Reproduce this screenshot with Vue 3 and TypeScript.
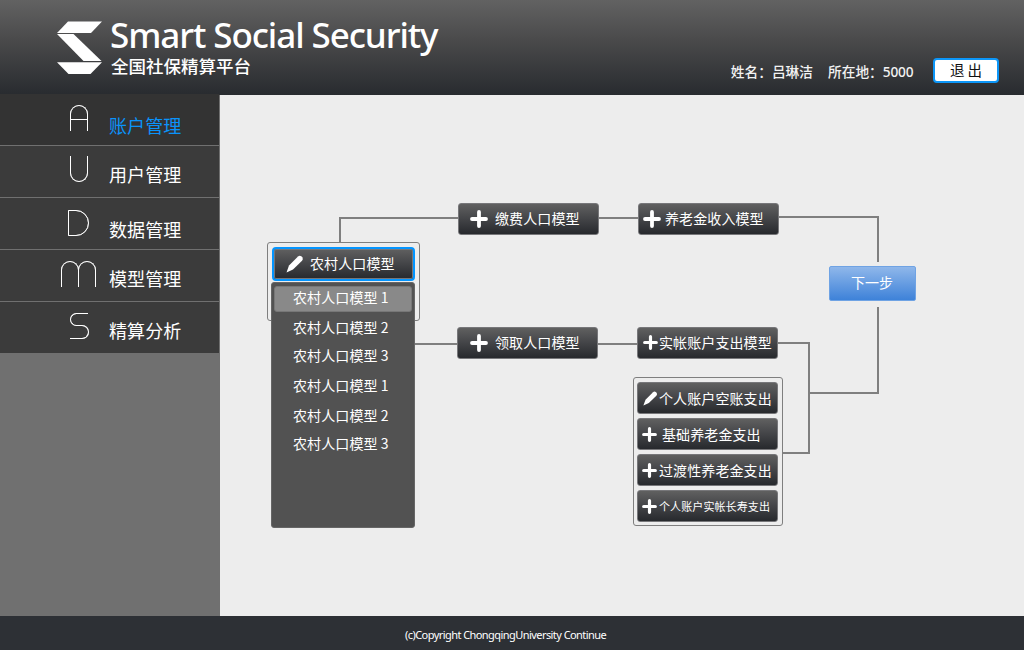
<script setup lang="ts">
type IconKind = 'plus' | 'pen'

interface MenuEntry {
  letter: string
  label: string
  active?: boolean
  // which vertical offset the label uses inside its row
  labelTop: string
}

interface FlowNode {
  label: string
  icon: IconKind
  x: number
  y: number
  variant?: string
}

interface Wire {
  x: number
  y: number
  w: number
  h: number
}

const menu: MenuEntry[] = [
  { letter: 'A', label: '账户管理', active: true, labelTop: 'mid' },
  { letter: 'U', label: '用户管理', labelTop: 'high' },
  { letter: 'D', label: '数据管理', labelTop: 'low' },
  { letter: 'M', label: '模型管理', labelTop: 'high' },
  { letter: 'S', label: '精算分析', labelTop: 'high' },
]

const options: string[] = [
  '农村人口模型 1',
  '农村人口模型 2',
  '农村人口模型 3',
  '农村人口模型 1',
  '农村人口模型 2',
  '农村人口模型 3',
]

const nodes: FlowNode[] = [
  { label: '缴费人口模型', icon: 'plus', x: 238, y: 108, variant: 'wide' },
  { label: '养老金收入模型', icon: 'plus', x: 418, y: 108, variant: 'snug' },
  { label: '领取人口模型', icon: 'plus', x: 237, y: 232, variant: 'wide shifted' },
  { label: '实帐账户支出模型', icon: 'plus', x: 417, y: 232 },
]

const stack: { label: string; icon: IconKind; variant?: string }[] = [
  { label: '个人账户空账支出', icon: 'pen' },
  { label: '基础养老金支出', icon: 'plus', variant: 'indent' },
  { label: '过渡性养老金支出', icon: 'plus' },
  { label: '个人账户实帐长寿支出', icon: 'plus', variant: 'small' },
]

const wires: Wire[] = [
  { x: 119, y: 122, w: 2, h: 26 },
  { x: 119, y: 122, w: 119, h: 2 },
  { x: 379, y: 122, w: 39, h: 2 },
  { x: 559, y: 121, w: 100, h: 2 },
  { x: 657, y: 121, w: 2, h: 46 },
  { x: 657, y: 212, w: 2, h: 87 },
  { x: 588, y: 297, w: 71, h: 2 },
  { x: 588, y: 247, w: 2, h: 112 },
  { x: 558, y: 247, w: 32, h: 2 },
  { x: 563, y: 357, w: 27, h: 2 },
  { x: 195, y: 248, w: 42, h: 2 },
  { x: 378, y: 248, w: 39, h: 2 },
]
</script>

<template>
  <div class="page">
    <header class="header">
      <div class="brand">
        <svg class="logo" viewBox="0 0 46 54" width="46" height="54" aria-hidden="true">
          <polygon points="1,12 12,0.5 46,0.5 35,12" />
          <polygon points="1,13 17.5,13 45.5,40 27.5,40" />
          <polygon points="1,41.2 46,41.2 34.5,53 12.5,53" />
        </svg>
        <div class="titles">
          <div class="title">Smart Social Security</div>
          <div class="subtitle">全国社保精算平台</div>
        </div>
      </div>
      <div class="account">
        <span class="who">姓名：吕琳洁</span>
        <span class="where">所在地：<span class="num">5000</span></span>
        <button class="exit" type="button">退 出</button>
      </div>
    </header>

    <div class="body">
      <nav class="sidebar">
        <div v-for="m in menu" :key="m.letter" class="entry" :class="[m.labelTop, { active: m.active }]">
          <div class="mark-cell">
            <div class="mark" :class="'mark-' + m.letter.toLowerCase()"><i></i><b></b></div>
          </div>
          <span class="entry-label">{{ m.label }}</span>
        </div>
      </nav>

      <main class="canvas">
        <div
          v-for="(w, i) in wires"
          :key="i"
          class="wire"
          :style="{ left: w.x + 'px', top: w.y + 'px', width: w.w + 'px', height: w.h + 'px' }"
        ></div>

        <div class="frame"></div>
        <div class="picker">
          <div class="picker-head">
            <svg class="pen" viewBox="0 0 18 18" width="18" height="18">
              <path d="M0.5 17.5 L3 10.5 L12 1.4 Q13.6 0 15.4 1.3 L16.5 2.5 Q17.4 4.2 16 5.8 L7 14.4 Z" />
            </svg>
            <span class="node-label">农村人口模型</span>
          </div>
          <div class="picker-list">
            <div v-for="(o, i) in options" :key="i" class="option" :class="{ chosen: i === 0 }">{{ o }}</div>
          </div>
        </div>

        <div
          v-for="n in nodes"
          :key="n.label"
          class="node placed"
          :class="n.variant"
          :style="{ left: n.x + 'px', top: n.y + 'px' }"
        >
          <svg class="plus" viewBox="0 0 18 18"><path d="M9 2V16M2 9H16" /></svg>
          <span class="node-label">{{ n.label }}</span>
        </div>

        <div class="stack">
          <div v-for="s in stack" :key="s.label" class="node" :class="s.variant">
            <svg v-if="s.icon === 'plus'" class="plus" viewBox="0 0 18 18"><path d="M9 2V16M2 9H16" /></svg>
            <svg v-else class="pen" viewBox="0 0 18 18">
              <path d="M0.5 17.5 L3 10.5 L12 1.4 Q13.6 0 15.4 1.3 L16.5 2.5 Q17.4 4.2 16 5.8 L7 14.4 Z" />
            </svg>
            <span class="node-label">{{ s.label }}</span>
          </div>
        </div>

        <button class="next" type="button">下一步</button>
      </main>
    </div>

    <footer class="footer"><span>(c)Copyright ChongqingUniversity Continue</span></footer>
  </div>
</template>

<style>
body {
  margin: 0;
  overflow: hidden;
}
</style>

<style scoped>
.page {
  width: 1024px;
  height: 650px;
  display: flex;
  flex-direction: column;
  overflow: hidden;
  color: #fff;
  background: #ededed;
  font-family: "Noto Sans", "Noto Sans CJK SC", sans-serif;
  white-space: nowrap;
}
.page * {
  box-sizing: border-box;
}
.header {
  flex: 0 0 95px;
  display: flex;
  justify-content: space-between;
  background: linear-gradient(#626262, #4a4a4b 42%, #282b2f);
}
.brand {
  display: flex;
  padding: 21px 0 0 56px;
}
.logo {
  fill: #fff;
}
.titles {
  margin: -7px 0 0 8px;
}
.title {
  height: 41px;
  line-height: 41px;
  font-size: 35px;
  font-weight: 500;
  letter-spacing: -1.08px;
}
.subtitle {
  margin-left: 1px;
  height: 22px;
  line-height: 22px;
  font-family: "Noto Sans CJK SC", sans-serif;
  font-size: 17.5px;
  font-weight: 500;
}
.account {
  display: flex;
  align-items: center;
  height: 25px;
  margin: 58px 25px 0 0;
  font-family: "Noto Sans CJK SC", sans-serif;
  font-size: 13.7px;
  font-weight: 500;
  color: #f2f2f2;
}
.where {
  margin-left: 15px;
  width: 105px;
}
.num {
  font-family: "Noto Sans", sans-serif;
  letter-spacing: -0.2px;
}
.exit {
  width: 66px;
  height: 25px;
  padding: 0;
  border: 2px solid #0c96f8;
  border-radius: 4px;
  background: #fff;
  color: #111;
  font: 400 14.5px/19px "Noto Sans CJK SC", sans-serif;
  padding-bottom: 2px;
}
.body {
  flex: 1;
  display: flex;
  min-height: 0;
}
.sidebar {
  width: 220px;
  background: #707070;
  border-right: 1px solid #707070;
}
.entry {
  display: flex;
  height: 52px;
  border-bottom: 1px solid #707070;
  background: #3b3b3b;
}
.entry:first-child {
  margin-top: -1px;
  background: #333;
}
.mark-cell {
  width: 109px;
  padding: 10px 0 0 61px;
}
.entry:first-child .mark-cell {
  padding-top: 11px;
}
.entry-label {
  height: 26px;
  line-height: 26px;
  font-family: "Noto Sans CJK SC", sans-serif;
  font-size: 18px;
  letter-spacing: 0.1px;
}
.mid .entry-label {
  margin-top: 18px;
}
.high .entry-label {
  margin-top: 15px;
}
.low .entry-label {
  margin-top: 18px;
}
.active .entry-label {
  color: #0a93fb;
}

/* thin monoline section marks */
.mark {
  display: flex;
  height: 26px;
  filter: drop-shadow(0.5px 0.5px 0 rgba(255, 255, 255, 0.6));
}
.mark i,
.mark b {
  display: block;
  border: 0 solid #fff;
}
.mark-a,
.mark-u {
  flex-direction: column;
  width: 18px;
  margin-left: 9px;
}
.mark-a i {
  height: 14px;
  border-width: 1px 1px 0;
  border-radius: 9px 9px 0 0;
}
.mark-a b {
  flex: 1;
  border-width: 1px 1px 0;
}
.mark-u i {
  height: 26px;
  border-width: 0 1px 1px;
  border-radius: 0 0 9px 9px;
}
.mark-u b,
.mark-d b {
  display: none;
}
.mark-d {
  margin: 2px 0 0 7px;
}
.mark-d i {
  width: 21px;
  border-width: 1px;
  border-radius: 0 13px 13px 0;
}
.mark-m {
  margin-top: 1px;
}
.mark-m i {
  width: 18px;
  border-width: 1px 1px 0;
  border-radius: 9px 9px 0 0;
}
.mark-m b {
  width: 18px;
  margin-left: -1px;
  border-width: 1px 1px 0;
  border-radius: 9px 9px 0 0;
}
.mark-s {
  flex-direction: column;
  width: 19px;
  margin: 1px 0 0 9px;
}
.mark-s i {
  width: 18px;
  height: 13px;
  border-width: 1px 0 1px 1px;
  border-radius: 7px 0 0 7px;
}
.mark-s b {
  height: 14px;
  margin-top: -1px;
  border-width: 1px 1px 1px 0;
  border-radius: 0 7px 7px 0;
}
.mark-s i {
  clip-path: polygon(0 0, 100% 0, 100% 50%, 60% 50%, 60% 100%, 0 100%);
}
.mark-s b {
  clip-path: polygon(40% 0, 100% 0, 100% 100%, 0 100%, 0 50%, 40% 50%);
}

.canvas {
  position: relative;
  flex: 1;
  background: #ededed;
  font-family: "Noto Sans CJK SC", sans-serif;
  font-size: 14px;
  letter-spacing: 0.1px;
}
.wire {
  position: absolute;
  background: #7f7f7f;
}
.node {
  display: flex;
  flex-shrink: 0;
  align-items: center;
  width: 141px;
  height: 32px;
  padding-left: 5px;
  border: 1px solid #77777a;
  border-radius: 3px;
  background: linear-gradient(#606060, #46474a 45%, #27292d);
}
.placed {
  position: absolute;
}
.plus {
  width: 15px;
  height: 15px;
  margin-right: 1px;
  fill: none;
  stroke: #fff;
  stroke-width: 3.8;
  stroke-linecap: round;
}
.node-label {
  line-height: 20px;
  padding-bottom: 2px;
}
.stack .node-label {
  padding-bottom: 1px;
}
.snug .plus,
.wide .plus {
  width: 18px;
  height: 18px;
  margin-right: 4px;
}
.snug {
  padding-left: 4px;
}
.wide {
  padding-left: 11px;
}
.wide .plus {
  margin-right: 7px;
}
.shifted {
  padding-left: 12px;
}
.placed .plus {
  margin-bottom: 1px;
}
.stack .plus {
  margin-left: -1px;
  margin-right: 2px;
}
.stack .indent .plus {
  margin-right: 5px;
}
.small {
  font-size: 11px;
}
.pen {
  width: 15px;
  height: 15px;
  margin-right: 1px;
  fill: #fff;
}
.stack {
  position: absolute;
  left: 413px;
  top: 282px;
  width: 150px;
  height: 149px;
  display: flex;
  flex-direction: column;
  gap: 4px;
  padding: 4px 3px 3px;
  border: 1px solid #7f7f7f;
  border-radius: 3px;
}
.frame {
  position: absolute;
  left: 47px;
  top: 147px;
  width: 153px;
  height: 79px;
  border: 1px solid #7f7f7f;
  border-radius: 3px;
}
.picker {
  position: absolute;
  left: 51px;
  top: 152px;
  width: 144px;
}
.picker-head {
  display: flex;
  align-items: center;
  height: 34px;
  margin-left: 1px;
  padding-left: 12px;
  border: 2px solid #0395ff;
  border-radius: 4px;
  background: linear-gradient(#606060, #46474a 45%, #27292d);
  box-shadow: inset 0 0 0 1px #77777a;
}
.picker-head .pen {
  width: 18px;
  height: 18px;
  margin-right: 6px;
}
.picker-list {
  height: 246px;
  margin-top: 1px;
  padding: 3px 2px;
  border: 1px solid #666;
  border-radius: 3px;
  background: #525252;
}
.option {
  height: 28px;
  padding-left: 19px;
  line-height: 28px;
}
.option:nth-child(4),
.option:nth-child(5) {
  margin-top: 2px;
}
.option.chosen {
  height: 26px;
  margin-bottom: 1px;
  padding-left: 18px;
  line-height: 21px;
  border: 1px solid #777;
  border-radius: 3px;
  background: #898989;
}
.next {
  position: absolute;
  left: 609px;
  top: 171px;
  width: 87px;
  height: 35px;
  padding: 0 1px 3px 0;
  border: 1px solid #6fa3e4;
  border-radius: 2px;
  background: linear-gradient(#8fb7ea, #3e82d9);
  color: #fff;
  font: 400 14px/30px "Noto Sans CJK SC", sans-serif;
}
.footer {
  flex: 0 0 34px;
  padding: 9px 0 0 405px;
  background: #2d3035;
  font-size: 11px;
  line-height: 20px;
  letter-spacing: -0.56px;
}
</style>
